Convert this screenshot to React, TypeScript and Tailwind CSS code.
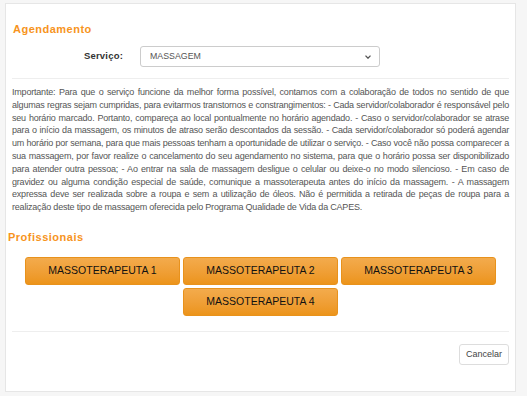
// Agendamento de massagem – modal de seleção de profissional

// texto já quebrado nas mesmas linhas da tela original
const LINHAS = [
  "Importante: Para que o serviço funcione da melhor forma possível, contamos com a colaboração de todos no sentido de que",
  "algumas regras sejam cumpridas, para evitarmos transtornos e constrangimentos: - Cada servidor/colaborador é responsável pelo",
  "seu horário marcado. Portanto, compareça ao local pontualmente no horário agendado. - Caso o servidor/colaborador se atrase",
  "para o início da massagem, os minutos de atraso serão descontados da sessão. - Cada servidor/colaborador só poderá agendar",
  "um horário por semana, para que mais pessoas tenham a oportunidade de utilizar o serviço. - Caso você não possa comparecer a",
  "sua massagem, por favor realize o cancelamento do seu agendamento no sistema, para que o horário possa ser disponibilizado",
  "para atender outra pessoa; - Ao entrar na sala de massagem desligue o celular ou deixe-o no modo silencioso. - Em caso de",
  "gravidez ou alguma condição especial de saúde, comunique a massoterapeuta antes do início da massagem. - A massagem",
  "expressa deve ser realizada sobre a roupa e sem a utilização de óleos. Não é permitida a retirada de peças de roupa para a",
  "realização deste tipo de massagem oferecida pelo Programa Qualidade de Vida da CAPES.",
];

const PROFISSIONAIS = [
  "MASSOTERAPEUTA 1",
  "MASSOTERAPEUTA 2",
  "MASSOTERAPEUTA 3",
  "MASSOTERAPEUTA 4",
];

export default function App() {
  return (
    <div className="w-[527px] h-[396px] bg-[#f6f6f6] pt-[3px] pl-[5px] font-['Liberation_Sans',Arial,sans-serif]">
      <div className="w-[511px] h-[389px] bg-white border border-[#e6e6e6] flex flex-col">
        {/* Agendamento */}
        <h4 className="mt-[18px] ml-[7px] text-[11px] leading-[14px] font-bold tracking-[0.5px] text-[#f7941d]">
          Agendamento
        </h4>

        <div className="mt-[10px] flex items-center">
          <label className="w-[117px] text-right text-[9.5px] font-bold tracking-[0.2px] text-[#333]">
            Serviço:
          </label>
          <div className="ml-[17px] relative w-[240px] h-[21px] border border-[#ccc] rounded-[3px] flex items-center pl-[9px] text-[8.8px] text-[#555]">
            MASSAGEM
            <svg
              className="absolute right-[8px] top-[8px]"
              width="6"
              height="4"
              viewBox="0 0 6 4"
            >
              <path d="M0.5 0.6 L3 3.2 L5.5 0.6" fill="none" stroke="#555" strokeWidth="1.3" />
            </svg>
          </div>
        </div>

        <div className="mt-[11px] mx-[6px] border-t border-[#eee]" />

        <div className="mt-[7px] mx-[6px] text-[9px] leading-[12.8px] tracking-[-0.2px] text-[#555]">
          {LINHAS.map((l, i) => (
            <p
              key={i}
              className={
                i < LINHAS.length - 1
                  ? "text-justify [text-align-last:justify]"
                  : "text-left"
              }
            >
              {l}
            </p>
          ))}
        </div>

        {/* Profissionais */}
        <h4 className="mt-[16px] ml-[2px] text-[11px] leading-[14px] font-bold tracking-[0.5px] text-[#f7941d]">
          Profissionais
        </h4>

        <div className="mt-[13px] mx-auto w-[471px] flex flex-wrap justify-center gap-[3px]">
          {PROFISSIONAIS.map((p) => (
            <button
              key={p}
              className="w-[155px] h-[28px] rounded-[3px] border border-[#e8921c] bg-gradient-to-b from-[#f3ab4c] to-[#ec9419] text-[10.5px] text-[#111]"
            >
              {p}
            </button>
          ))}
        </div>

        <div className="mt-[15px] mx-[6px] border-t border-[#eee]" />

        <div className="mt-[12px] mr-[6px] flex justify-end">
          <button className="w-[50px] h-[21px] border border-[#ddd] rounded-[3px] bg-white text-[9px] text-[#444]">
            Cancelar
          </button>
        </div>
      </div>
    </div>
  );
}
